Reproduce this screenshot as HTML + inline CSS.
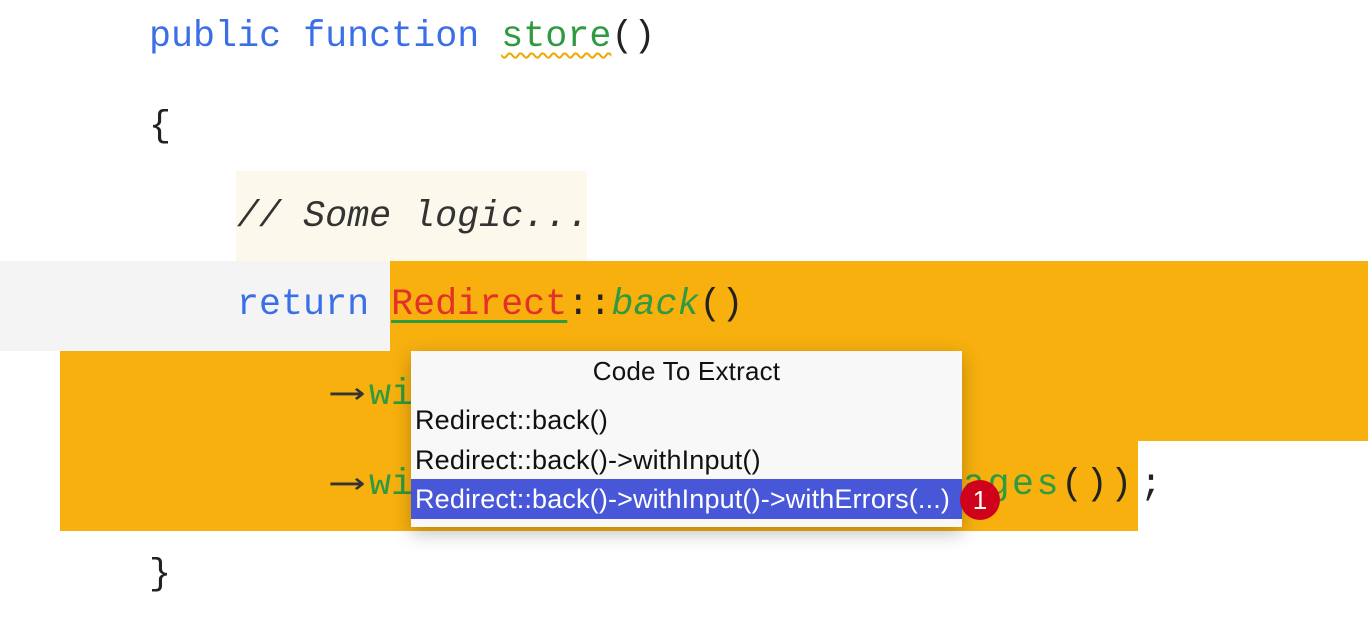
<!DOCTYPE html>
<html><head><style>
html,body{margin:0;padding:0;width:1368px;height:636px;background:#fff;overflow:hidden;position:relative}
.bg{position:absolute}
.code{position:absolute;left:0;font-family:"Liberation Mono",monospace;font-size:36.7px;white-space:pre;line-height:90px;height:90px}
.b{color:#3a6fe6}.g{color:#2f9a40}.r{color:#e3302a}.d{color:#222}.c{color:#333;font-style:italic}
.ar{display:inline-block;width:44px;text-align:center;color:#333;transform:scaleX(1.3)}
.popup{position:absolute;left:411px;top:351px;width:551px;height:176px;background:#f8f8f8;box-shadow:0 6px 18px rgba(0,0,0,.25);font-family:"Liberation Sans",sans-serif;font-size:26px;letter-spacing:0.2px;color:#111}
.item{position:absolute;left:0;width:551px;height:40px;line-height:40px;padding-left:4px;box-sizing:border-box;white-space:nowrap;overflow:hidden;font-size:27px;letter-spacing:0.15px}
</style></head><body>
<div class="bg" style="left:236px;top:171px;width:351px;height:90px;background:#fdf8ec"></div>
<div class="bg" style="left:0;top:261px;width:390px;height:90px;background:#f4f4f4"></div>
<div class="bg" style="left:390px;top:261px;width:978px;height:90px;background:#f7b00e"></div>
<div class="bg" style="left:60px;top:351px;width:1308px;height:90px;background:#f7b00e"></div>
<div class="bg" style="left:60px;top:441px;width:1078px;height:90px;background:#f7b00e"></div>

<div class="code" style="top:-8px;left:149px"><span class="b">public function </span><span class="g" style="text-decoration:underline wavy #f0a800;text-decoration-thickness:2px;text-underline-offset:6px">store</span><span class="d">()</span></div>
<div class="code d" style="top:82px;left:149px">{</div>
<div class="code c" style="top:172px;left:237px">// Some logic...</div>
<div class="code" style="top:260px;left:237px"><span class="b">return </span><span class="r" style="text-decoration:underline #2f9a40;text-decoration-thickness:3px;text-underline-offset:6px">Redirect</span><span class="d">::</span><span class="g" style="font-style:italic">back</span><span class="d">()</span></div>
<div class="code" style="top:350px;left:325px"><span class="ar">⟶</span><span class="g">withInput</span><span class="d">()</span></div>
<div class="code" style="top:440px;left:325px"><span class="ar">⟶</span><span class="g">withErrors</span></div>
<div class="code" style="top:440px;left:963px;letter-spacing:2.5px"><span class="g">ages</span><span class="d">())</span></div>
<div class="code d" style="top:440px;left:1140px">;</div>
<div class="code d" style="top:530px;left:149px">}</div>

<div class="popup">
<div style="position:absolute;top:5px;width:551px;text-align:center">Code To Extract</div>
<div class="item" style="top:49px">Redirect::back()</div>
<div class="item" style="top:89px">Redirect::back()-&gt;withInput()</div>
<div class="item" style="top:128px;background:#4757d8;color:#fff">Redirect::back()-&gt;withInput()-&gt;withErrors(...)</div>
</div>
<div style="position:absolute;left:960px;top:480px;width:40px;height:40px;border-radius:50%;background:#d0021b;color:#fff;font-family:'Liberation Sans',sans-serif;font-size:26px;line-height:40px;text-align:center">1</div>
</body></html>
